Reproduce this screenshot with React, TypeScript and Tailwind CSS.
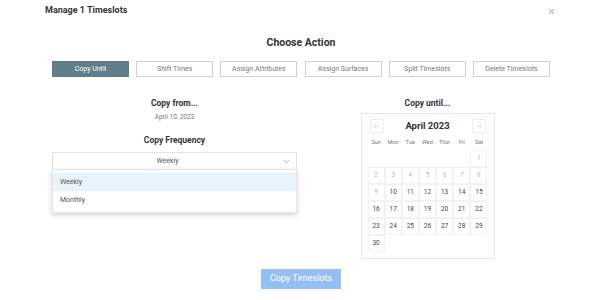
import React from "react";
import { X, ChevronDown } from "lucide-react";

const actions = [
  "Copy Until",
  "Shift Times",
  "Assign Attributes",
  "Assign Surfaces",
  "Split Timeslots",
  "Delete Timeslots",
];

const dayNames = ["Sun", "Mon", "Tue", "Wed", "Thur", "Fri", "Sat"];

const Calendar = () => {
  const cells: (number | null)[] = [null, null, null, null, null, null];
  for (let d = 1; d <= 30; d++) cells.push(d);

  return (
    <div className="w-[134px] border border-[#e6e6e6] px-[6px] pt-[5px] pb-[6px]">
      <div className="flex items-center justify-between px-[2px] h-[14px] mb-[3px]">
        <div className="w-[14px] h-[14px] border border-[#eeeeee] flex items-center justify-center text-[8px] text-[#999]">
          ←
        </div>
        <div className="text-[9.5px] font-bold text-[#333]">April 2023</div>
        <div className="w-[14px] h-[14px] border border-[#eeeeee] flex items-center justify-center text-[8px] text-[#999]">
          →
        </div>
      </div>
      <div className="grid grid-cols-7 h-[13px] items-center">
        {dayNames.map((n) => (
          <div key={n} className="text-center text-[5.5px] text-[#777]">
            {n}
          </div>
        ))}
      </div>
      <div className="grid grid-cols-7 mt-[1px]">
        {cells.map((d, i) =>
          d === null ? (
            <div key={i} className="h-[17px]" />
          ) : (
            <div
              key={i}
              className={`h-[17px] flex items-center justify-center text-[6.5px] border-[0.5px] border-[#f2f2f2] ${
                d < 10 ? "text-[#bbbbbb]" : "text-[#444]"
              }`}
            >
              {d}
            </div>
          )
        )}
      </div>
    </div>
  );
};

export default function App() {
  return (
    <div className="w-[600px] h-[300px] bg-white overflow-hidden font-['Roboto',sans-serif] relative">
      <div className="flex items-center justify-between pl-[45px] pr-[44px] h-[22px]">
        <div className="text-[9px] font-bold text-[#333]">Manage 1 Timeslots</div>
        <X size={9} className="text-[#666]" strokeWidth={1.5} />
      </div>

      <div className="ml-[52px] w-[498px]">
        <div className="text-center text-[10.5px] font-bold text-[#333] mt-[14px] leading-[14px]">
          Choose Action
        </div>

        <div className="flex justify-between mt-[11px]">
          {actions.map((a, i) => (
            <div
              key={a}
              className={`w-[77px] h-[16px] flex items-center justify-center text-[7px] ${
                i === 0
                  ? "bg-[#627d8a] text-white border border-[#627d8a]"
                  : "border border-[#cfcfcf] text-[#777]"
              }`}
            >
              {a}
            </div>
          ))}
        </div>

        <div className="grid grid-cols-2 gap-[8px] mt-[20px]">
          <div className="flex flex-col items-center relative">
            <div className="text-[8.5px] font-bold text-[#333] leading-[12px]">Copy from...</div>
            <div className="text-[6.5px] text-[#777] mt-[3px] leading-[10px]">April 10, 2023</div>
            <div className="text-[8.5px] font-bold text-[#333] mt-[12px] leading-[12px]">Copy Frequency</div>
            <div className="w-full h-[18px] mt-[6px] border border-[#e2e2e2] flex items-center relative">
              <div className="flex-1 text-center text-[7px] text-[#555] pl-[2px] pr-[16px]">Weekly</div>
              <ChevronDown size={9} className="absolute right-[5px] text-[#777]" strokeWidth={1.5} />
            </div>
            <div className="absolute left-0 right-0 top-[72px] bg-white border border-[#e6e6e6] shadow-[0_2px_5px_rgba(0,0,0,0.18)] pt-[3px] pb-[3px]">
              <div className="h-[18px] bg-[#e9f3fb] flex items-center pl-[7px] text-[7px] text-[#555]">Weekly</div>
              <div className="h-[18px] flex items-center pl-[7px] text-[7px] text-[#555]">Monthly</div>
            </div>
          </div>

          <div className="flex flex-col items-center">
            <div className="text-[8.5px] font-bold text-[#333] leading-[12px]">Copy until...</div>
            <div className="mt-[4px]">
              <Calendar />
            </div>
          </div>
        </div>

        <div className="flex justify-center mt-[10px]">
          <div className="w-[80px] h-[20px] bg-[#94bff4] text-white text-[9px] flex items-center justify-center">
            Copy Timeslots
          </div>
        </div>
      </div>
    </div>
  );
}
